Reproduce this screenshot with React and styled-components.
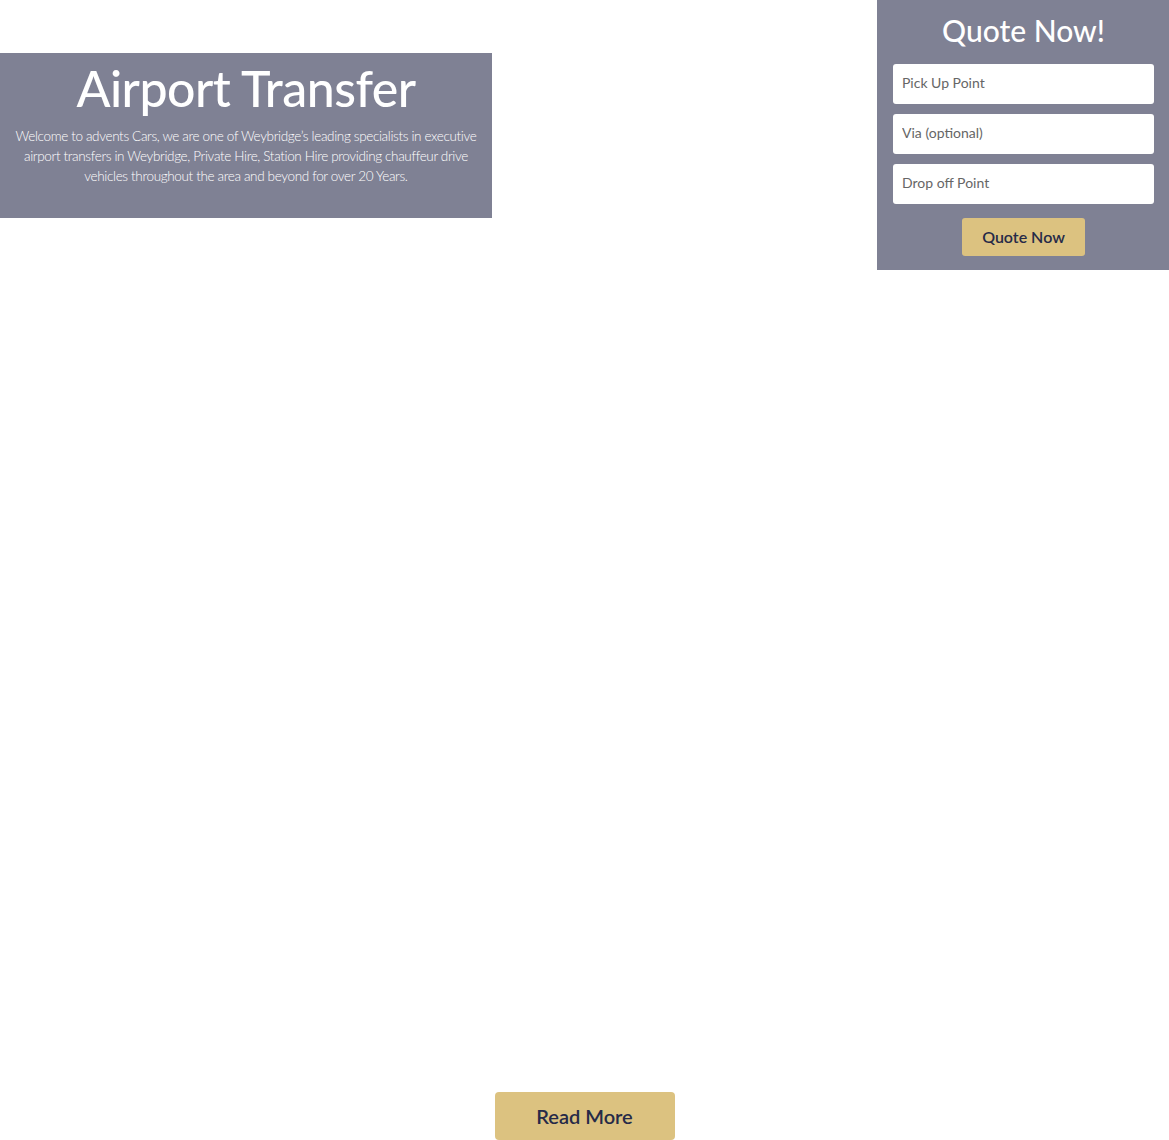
import React from 'react';
import styled, { createGlobalStyle } from 'styled-components';

const GlobalStyle = createGlobalStyle`
  body {
    margin: 0;
    background: #ffffff;
    font-family: Lato, "Open Sans", sans-serif;
  }
`;

const fields = ['Pick Up Point', 'Via (optional)', 'Drop off Point'];

const App = () => {
  return (
    <Page>
      <GlobalStyle />
      <Hero>
        <IntroPanel>
          <Title>Airport Transfer</Title>
          <Intro>
            Welcome to advents Cars, we are one of Weybridge’s leading specialists in executive
            airport transfers in Weybridge, Private Hire, Station Hire providing chauffeur drive
            vehicles throughout the area and beyond for over 20 Years.
          </Intro>
        </IntroPanel>
        <QuoteForm onSubmit={(e) => e.preventDefault()}>
          <QuoteTitle>Quote Now!</QuoteTitle>
          {fields.map((f) => (
            <Field key={f} type="text" placeholder={f} />
          ))}
          <QuoteButton type="submit">Quote Now</QuoteButton>
        </QuoteForm>
      </Hero>
      <Footer>
        <ReadMore>Read More</ReadMore>
      </Footer>
    </Page>
  );
};

const Page = styled.div`
  width: 1169px;
  height: 1140px;
  display: flex;
  flex-direction: column;
  justify-content: space-between;
`;

const Hero = styled.div`
  display: flex;
  justify-content: space-between;
  align-items: flex-start;
`;

const IntroPanel = styled.div`
  margin-top: 53px;
  width: 492px;
  height: 165px;
  box-sizing: border-box;
  background-color: #7f8194;
  color: #ffffff;
  text-align: center;
  padding: 6px 8px 0;
`;

const Title = styled.h1`
  margin: 0;
  font-size: 50px;
  font-weight: 500;
  line-height: 58px;
  letter-spacing: -0.5px;
`;

const Intro = styled.p`
  margin: 9px 0 0;
  font-size: 13.5px;
  font-weight: 300;
  line-height: 20px;
  letter-spacing: -0.35px;
  color: #ffffff;
`;

const QuoteForm = styled.form`
  width: 292px;
  height: 270px;
  box-sizing: border-box;
  background-color: #7f8194;
  padding: 10px 15px 0 16px;
  display: flex;
  flex-direction: column;
  align-items: center;
  gap: 10px;
`;

const QuoteTitle = styled.h2`
  margin: 0 0 4px;
  color: #ffffff;
  font-size: 30px;
  font-weight: 500;
  line-height: 40px;
`;

const Field = styled.input`
  width: 100%;
  height: 40px;
  box-sizing: border-box;
  border: none;
  border-radius: 3px;
  padding: 0 9px 3px;
  font-family: Lato, sans-serif;
  font-size: 14px;
  background: #ffffff;

  &::placeholder {
    color: #666666;
  }
`;

const QuoteButton = styled.button`
  margin-top: 4px;
  width: 123px;
  height: 38px;
  border: none;
  border-radius: 3px;
  background-color: #dcc280;
  color: #262a48;
  font-family: Lato, sans-serif;
  font-size: 16px;
  font-weight: 600;
  padding-bottom: 3px;
  cursor: pointer;
`;

const Footer = styled.div`
  display: flex;
  justify-content: center;
`;

const ReadMore = styled.button`
  width: 180px;
  height: 48px;
  border: none;
  border-radius: 4px;
  background-color: #dcc280;
  color: #262a48;
  font-family: Lato, sans-serif;
  font-size: 20px;
  font-weight: 600;
  padding-bottom: 2px;
  cursor: pointer;
`;

export default App;
